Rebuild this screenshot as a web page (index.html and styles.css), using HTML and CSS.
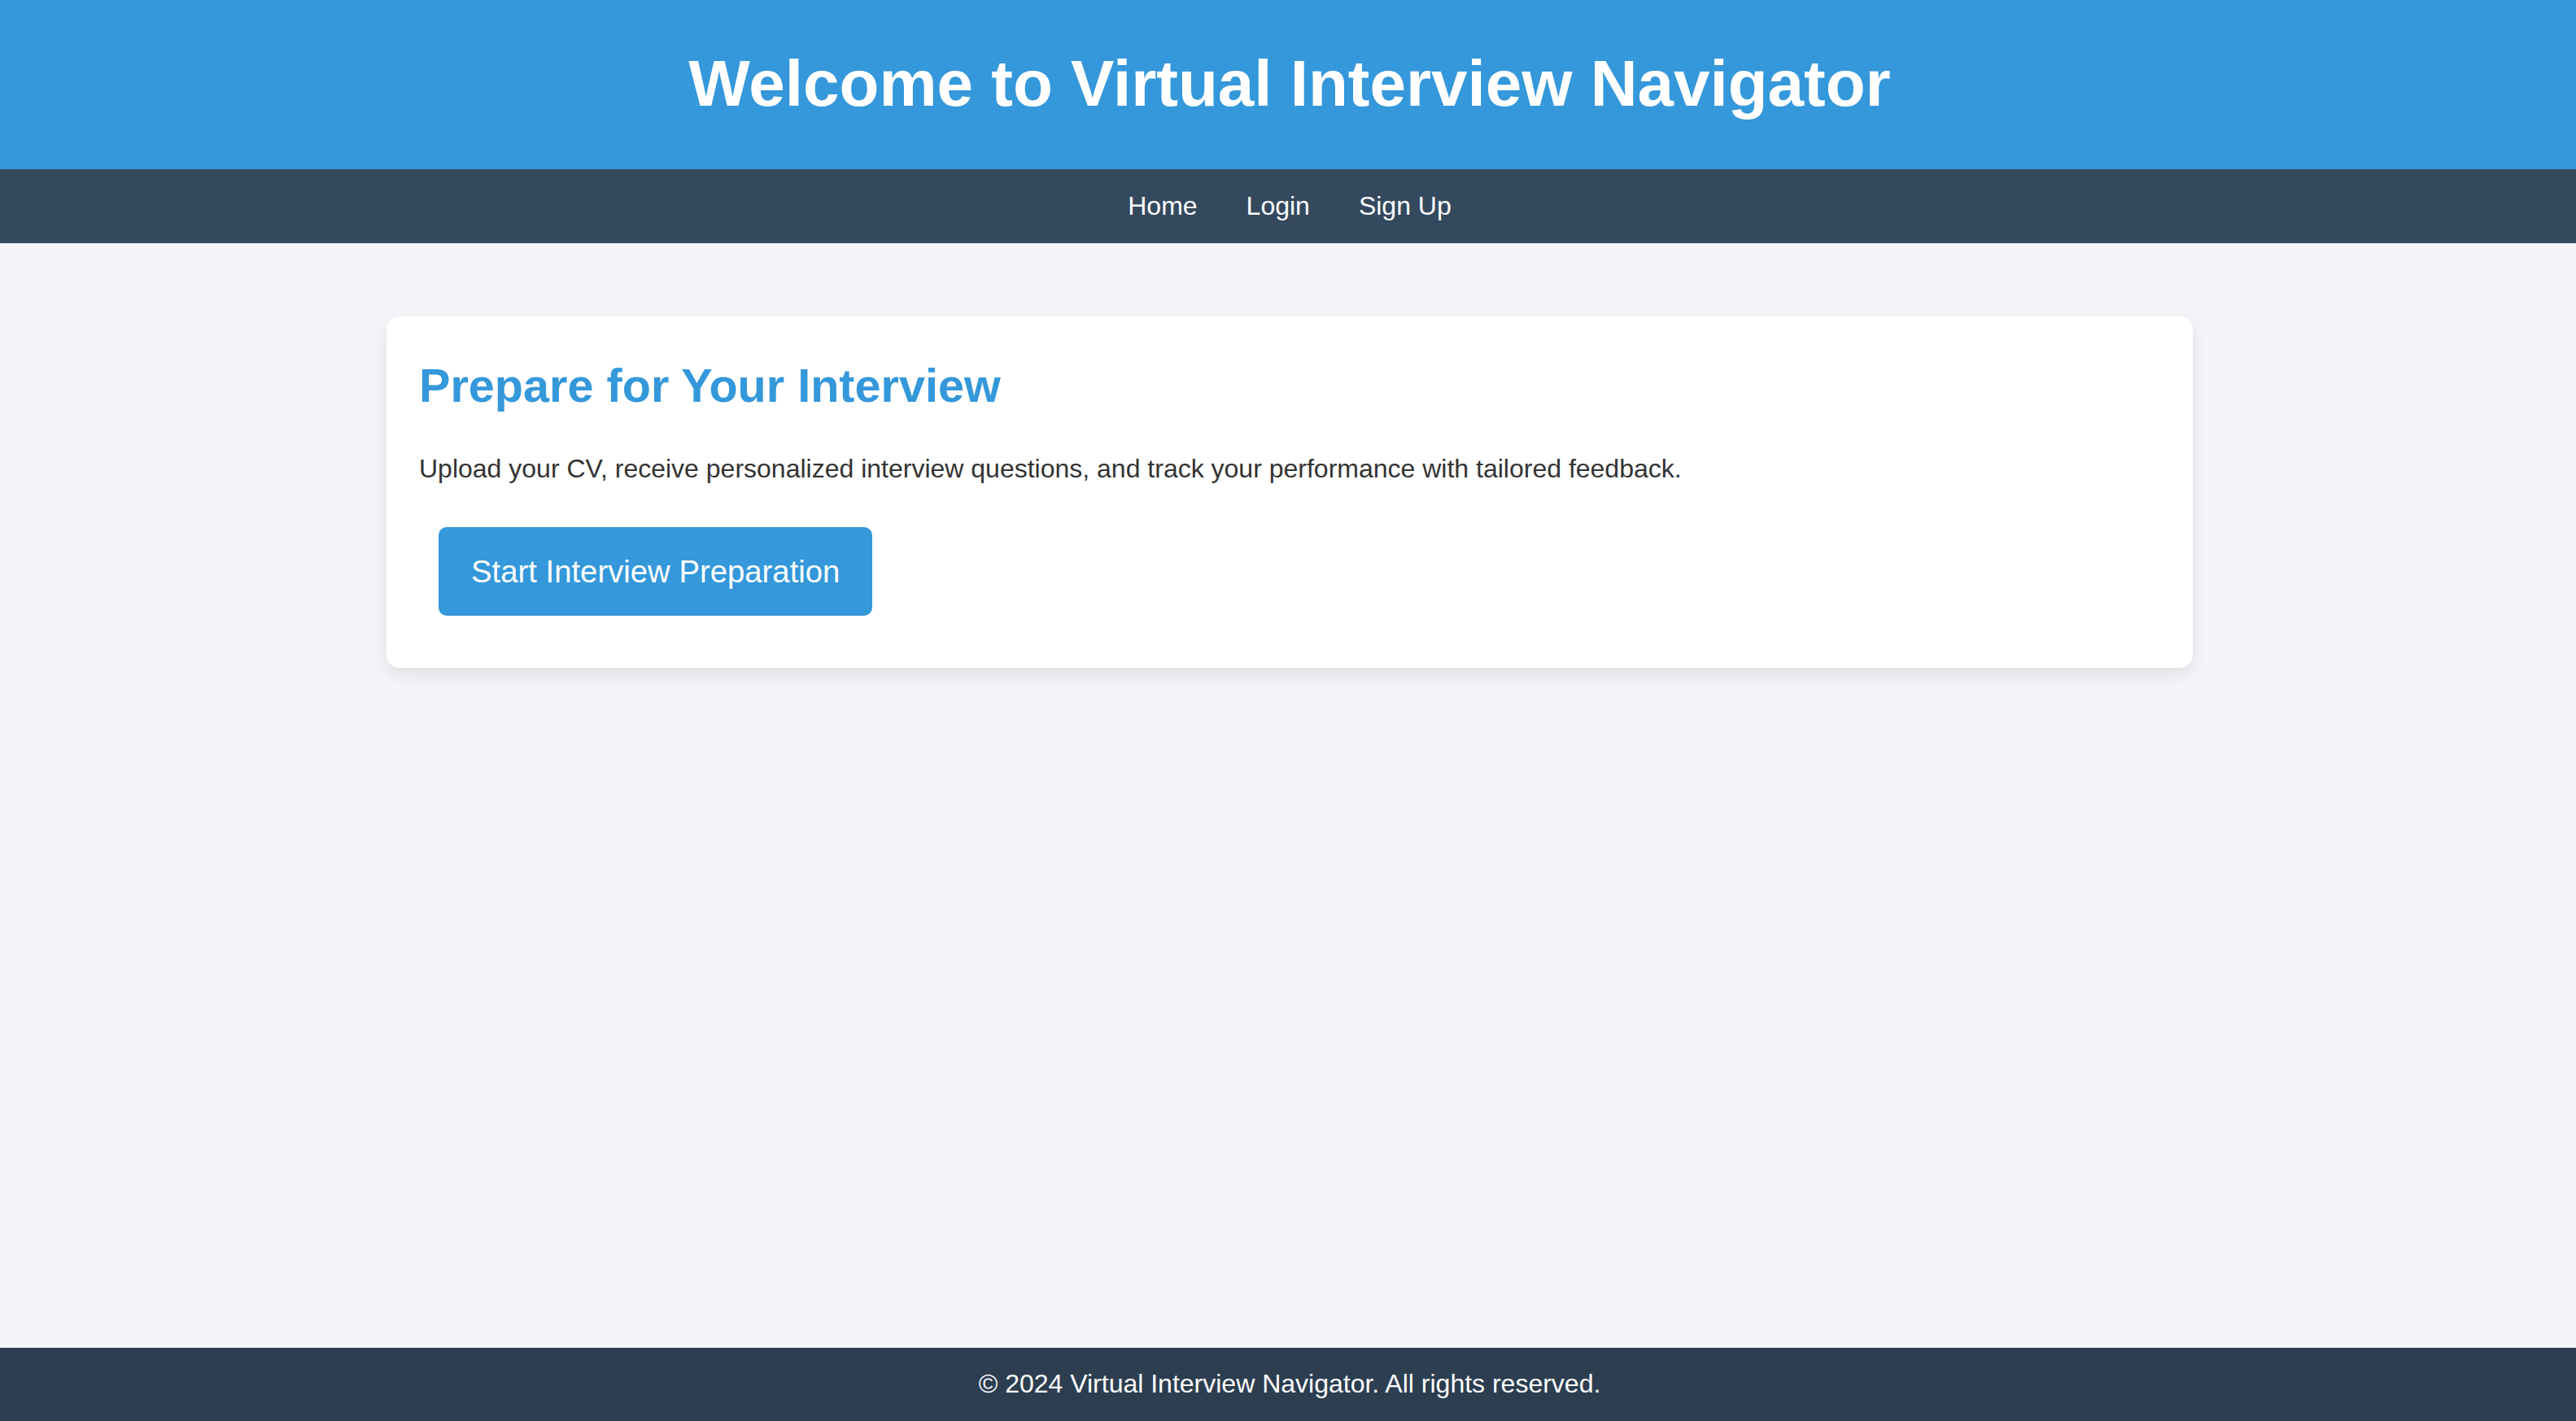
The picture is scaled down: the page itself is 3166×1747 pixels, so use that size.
FILE: index.html
```html
<!DOCTYPE html>
<html lang="en">
<head>
<meta charset="utf-8">
<title>Virtual Interview Navigator</title>
<link rel="stylesheet" href="styles.css">
</head>
<body>
  <header class="site-header">
    <h1 class="site-title">Welcome to Virtual Interview Navigator</h1>
  </header>
  <nav class="site-nav">
    <a class="nav-link" href="#">Home</a>
    <a class="nav-link" href="#">Login</a>
    <a class="nav-link" href="#">Sign Up</a>
  </nav>
  <main class="main">
    <section class="card">
      <h2 class="card-title">Prepare for Your Interview</h2>
      <p class="card-text">Upload your CV, receive personalized interview questions, and track your performance with tailored feedback.</p>
      <div class="card-actions">
        <a class="btn" href="#">Start Interview Preparation</a>
      </div>
    </section>
  </main>
  <footer class="site-footer">
    <p class="footer-text">&copy; 2024 Virtual Interview Navigator. All rights reserved.</p>
  </footer>
</body>
</html>
```
FILE: styles.css
```css
* { box-sizing: border-box; }

html, body { height: 100%; }

body {
  margin: 0;
  min-height: 100vh;
  display: flex;
  flex-direction: column;
  background: #f4f5f9;
  font-family: "Liberation Sans", Arial, sans-serif;
  color: #333333;
}

.site-header {
  background: #3498db;
  color: #ffffff;
  text-align: center;
  padding: 56px 0 59px 4px;
}

.site-title {
  margin: 0;
  font-size: 80px;
  font-weight: 700;
  line-height: 93px;
}

.site-nav {
  background: #34495e;
  display: flex;
  justify-content: center;
  padding: 27px 0 27px 4px;
}

.nav-link {
  color: #ffffff;
  text-decoration: none;
  font-size: 32px;
  line-height: 37px;
  margin: 0 30px;
}

.main {
  flex: 1;
  padding: 90px 0 90px 4px;
}

.card {
  max-width: 2220px;
  margin: 0 auto;
  background: #ffffff;
  border-radius: 16px;
  box-shadow: 0 8px 20px rgba(0, 0, 0, 0.09);
  padding: 40px;
}

.card-title {
  margin: 12px 0 50px;
  color: #3498db;
  font-size: 57.6px;
  font-weight: 700;
  line-height: 67px;
}

.card-text {
  margin: 0 0 29px;
  font-size: 32px;
  line-height: 37px;
  color: #333333;
}

.card-actions {
  display: flex;
}

.btn {
  display: block;
  margin: 24px;
  padding: 33px 40px;
  background: #3498db;
  color: #ffffff;
  text-decoration: none;
  font-size: 38.3px;
  line-height: 43px;
  border-radius: 10px;
}

.site-footer {
  background: #2c3e50;
  color: #ffffff;
  text-align: center;
  padding: 26px 0 27px 4px;
}

.footer-text {
  margin: 0;
  font-size: 32px;
  line-height: 37px;
}
```
